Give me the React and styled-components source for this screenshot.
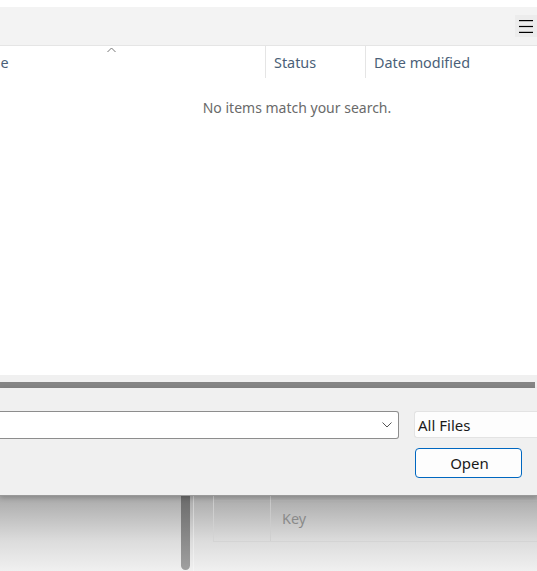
import React from "react";
import styled, { createGlobalStyle } from "styled-components";

const Global = createGlobalStyle`
  html, body { margin: 0; padding: 0; background: #ffffff; }
  body { font-family: "Segoe UI", "Noto Sans", "Open Sans", sans-serif; }
`;

const Window = styled.div`
  width: 537px;
  height: 571px;
  overflow: hidden;
  display: flex;
  flex-direction: column;
  background: #ffffff;
`;

const TopGap = styled.div`
  height: 7px;
  background: #ffffff;
  flex: none;
`;

const Toolbar = styled.div`
  height: 38px;
  flex: none;
  background: #f3f3f3;
  border-bottom: 1px solid #e5e5e5;
  display: flex;
  align-items: center;
  justify-content: flex-end;
  padding-right: 0px;
`;

const MenuButton = styled.div`
  width: 22px;
  height: 22px;
  background: #ececec;
  display: flex;
  align-items: center;
  justify-content: center;
`;

const ListArea = styled.div`
  height: 329px;
  flex: none;
  background: #ffffff;
  display: flex;
  flex-direction: column;
`;

const HeaderRow = styled.div`
  display: flex;
  height: 32px;
  margin-left: -40px;
`;

const HeaderCell = styled.div`
  position: relative;
  width: ${(p) => p.$w}px;
  flex: none;
  box-sizing: border-box;
  padding-left: 8px;
  padding-top: 7px;
  font-size: 14.4px;
  color: #4b5f78;
  border-right: ${(p) => (p.$sep ? "1px solid #e5e5e5" : "none")};
  white-space: nowrap;
`;

const SortCaret = styled.svg`
  position: absolute;
  top: 1px;
  left: 50%;
  margin-left: -6px;
`;

const EmptyMessage = styled.div`
  text-align: center;
  padding-top: 20px;
  padding-left: 57px;
  font-size: 14px;
  color: #6a6a6a;
`;

const Splitter = styled.div`
  height: 13px;
  flex: none;
  background: #f0f0f0;
  display: flex;
  flex-direction: column;
  justify-content: flex-end;
`;

const SplitBar = styled.div`
  height: 6px;
  margin-right: 2px;
  background: #858585;
`;

const Panel = styled.div`
  height: 108px;
  box-sizing: border-box;
  flex: none;
  background: #f0f0f0;
  border-bottom: 1px solid #999999;
  box-shadow: 0 2px 5px rgba(0, 0, 0, 0.2);
  position: relative;
  z-index: 1;
  display: grid;
  grid-template-columns: 399px 140px;
  column-gap: 15px;
  row-gap: 9px;
  align-content: start;
  padding-top: 23px;
`;

const Combo = styled.div`
  height: 28px;
  box-sizing: border-box;
  background: #ffffff;
  border: 1px solid #8d8d8d;
  border-left: none;
  border-radius: 0 3px 3px 0;
  display: flex;
  align-items: center;
  justify-content: flex-end;
  padding-right: 6px;
`;

const FilterBox = styled.div`
  height: 27px;
  box-sizing: border-box;
  background: #fdfdfd;
  border: 1px solid #e3e3e3;
  border-right: none;
  border-radius: 3px 0 0 3px;
  padding-left: 3px;
  display: flex;
  align-items: center;
  font-size: 15px;
  color: #1a1a1a;
`;

const OpenButton = styled.div`
  grid-column: 2;
  width: 107px;
  height: 30px;
  box-sizing: border-box;
  margin-left: 1px;
  border: 1px solid #0067c0;
  border-radius: 4px;
  background: #fdfdfd;
  display: flex;
  align-items: center;
  justify-content: center;
  padding-left: 2px;
  font-size: 15px;
  color: #1a1a1a;
`;

const Backdrop = styled.div`
  flex: 1;
  background: linear-gradient(#a9a9a9, #dcdcdc 60%, #f0f0f0);
  display: grid;
  grid-template-columns: 181px 9px 3px 1px 19px 1fr;
`;

const Thumb = styled.div`
  grid-column: 2;
  background: linear-gradient(#6b6b6b, #a0a0a0);
  border-radius: 0 0 5px 5px;
  margin-bottom: 1px;
`;

const VLine = styled.div`
  grid-column: 4;
  background: rgba(255, 255, 255, 0.35);
`;

const Table = styled.div`
  grid-column: 6;
  display: grid;
  grid-template-columns: 57px 1fr;
  grid-template-rows: 4px 41px;
  align-self: start;
  border-left: 1px solid rgba(210, 210, 210, 0.8);
  border-bottom: 1px solid rgba(210, 210, 210, 0.8);
`;

const Cell = styled.div`
  box-sizing: border-box;
  border-right: ${(p) => (p.$right ? "1px solid rgba(205,205,205,0.8)" : "none")};
  border-bottom: ${(p) => (p.$bottom ? "1px solid rgba(180,180,180,0.7)" : "none")};
  font-size: 14.4px;
  color: #8a8a8a;
  padding-left: 11px;
  padding-bottom: 4px;
  display: flex;
  align-items: center;
`;

export default function App() {
  return (
    <>
      <Global />
      <Window>
        <TopGap />
        <Toolbar>
          <MenuButton>
            <svg width="14" height="13" viewBox="0 0 14 13">
              <g stroke="#000" strokeWidth="1.2">
                <line x1="0" y1="0.6" x2="14" y2="0.6" />
                <line x1="0" y1="6.5" x2="14" y2="6.5" />
                <line x1="0" y1="12.4" x2="14" y2="12.4" />
              </g>
            </svg>
          </MenuButton>
        </Toolbar>
        <ListArea>
          <HeaderRow>
            <HeaderCell $w={306} $sep>
              Name
              <SortCaret width="9" height="6" viewBox="0 0 9 6">
                <polyline points="0.5,5 4.5,1 8.5,5" fill="none" stroke="#777" strokeWidth="1" />
              </SortCaret>
            </HeaderCell>
            <HeaderCell $w={100} $sep>Status</HeaderCell>
            <HeaderCell $w={200}>Date modified</HeaderCell>
          </HeaderRow>
          <EmptyMessage>No items match your search.</EmptyMessage>
        </ListArea>
        <Splitter>
          <SplitBar />
        </Splitter>
        <Panel>
          <Combo>
            <svg width="10" height="6" viewBox="0 0 10 6">
              <polyline points="0.5,0.5 5,5 9.5,0.5" fill="none" stroke="#555" strokeWidth="1" />
            </svg>
          </Combo>
          <FilterBox>All Files</FilterBox>
          <OpenButton>Open</OpenButton>
        </Panel>
        <Backdrop>
          <Thumb />
          <VLine />
          <Table>
            <Cell $right $bottom />
            <Cell $bottom />
            <Cell $right />
            <Cell>Key</Cell>
          </Table>
        </Backdrop>
      </Window>
    </>
  );
}
